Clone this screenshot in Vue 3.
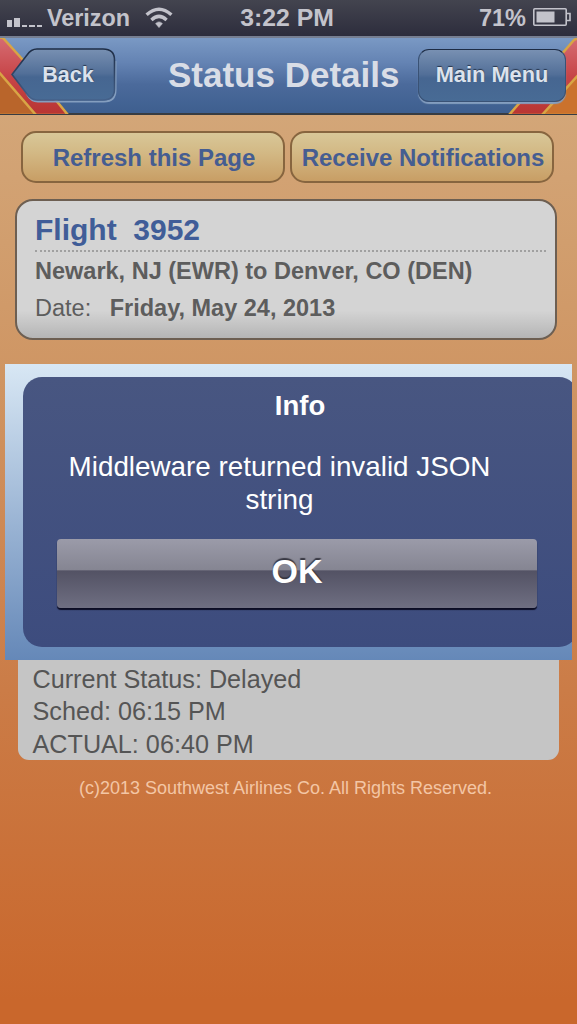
<template>
  <div class="screen">
    <div class="status-bar">
      <div class="carrier">
        <div class="signal">
          <i v-for="(bar, index) in signalBars" :key="index" :style="{ height: bar + 'px' }"></i>
        </div>
        <span>Verizon</span>
        <svg class="wifi" width="28" height="21" viewBox="0 0 28 21">
          <path d="M1.6 7.8 Q14 -3.4 26.4 7.8" />
          <path d="M6.4 12.9 Q14 5.8 21.6 12.9" />
          <path class="dot" d="M14 20.6 L10.6 16.6 Q14 13.2 17.4 16.6 Z" />
        </svg>
      </div>
      <div class="time">3:22 PM</div>
      <div class="battery">
        <span>71%</span>
        <svg width="38" height="18" viewBox="0 0 38 18">
          <rect x="0.8" y="0.8" width="32.4" height="16.4" rx="1" fill="none" stroke="#c3c3cb" stroke-width="1.6" />
          <rect x="3.5" y="3.5" width="18" height="11" fill="#c3c3cb" />
          <path d="M33.5 5.5 H37 V12.5 H33.5" fill="none" stroke="#c3c3cb" stroke-width="1.6" />
        </svg>
      </div>
    </div>

    <header class="header">
      <svg class="stripes" width="577" height="76" viewBox="0 0 577 76">
        <g stroke="#d8a545" stroke-width="2.5">
          <path d="M-3 -1 L3 0 L23 22 L68 77 H34 L-3 36 Z" fill="url(#stripe)" />
          <path d="M-3 32 L36 77 H-3 Z" fill="#b9652b" />
          <path d="M580 -1 L574 2 L509 77 H543 L580 38 Z" fill="url(#stripe)" />
          <path d="M580 35 L542 77 H580 Z" fill="#cb722d" />
        </g>
        <defs>
          <linearGradient id="stripe" x1="0" y1="0" x2="0" y2="1">
            <stop offset="0" stop-color="#d66d73" />
            <stop offset="0.5" stop-color="#c74548" />
            <stop offset="1" stop-color="#b83532" />
          </linearGradient>
        </defs>
      </svg>
      <button class="back">
        <svg width="106" height="56" viewBox="0 0 106 56">
          <defs>
            <linearGradient id="backFill" x1="0" y1="0" x2="0" y2="1">
              <stop offset="0" stop-color="#7890b2" />
              <stop offset="0.48" stop-color="#526f98" />
              <stop offset="0.55" stop-color="#466691" />
              <stop offset="1" stop-color="#486b95" />
            </linearGradient>
            <linearGradient id="backEdge" x1="0" y1="0" x2="0" y2="1">
              <stop offset="0" stop-color="#1d2c45" />
              <stop offset="1" stop-color="#45618a" />
            </linearGradient>
          </defs>
          <path
            d="M16 46 Q20 53.5 27 53.5 H93 Q104.5 53.5 104.5 42 V13"
            fill="none"
            stroke="#849ebf"
            stroke-width="2"
          />
          <path
            d="M26 1 H92 Q103.5 1 103.5 12 V41 Q103.5 52 92 52 H26 Q20 52 16 46 L1 26.5 L16 7 Q20 1 26 1 Z"
            fill="url(#backFill)"
            stroke="url(#backEdge)"
            stroke-width="1.6"
          />
        </svg>
        <span>Back</span>
      </button>
      <h1>Status Details</h1>
      <button class="menu">Main Menu</button>
    </header>

    <div class="actions">
      <button>Refresh this Page</button>
      <button>Receive Notifications</button>
    </div>

    <section class="flight">
      <h2>Flight&nbsp; 3952</h2>
      <p class="route">Newark, NJ (EWR) to Denver, CO (DEN)</p>
      <p class="date">Date: <b>Friday, May 24, 2013</b></p>
    </section>

    <section class="details">
      <p v-for="line in details" :key="line">{{ line }}</p>
    </section>

    <footer>(c)2013 Southwest Airlines Co. All Rights Reserved.</footer>

    <div class="dialog-frame">
      <div class="dialog">
        <h3>Info</h3>
        <p>Middleware returned invalid JSON string</p>
        <button><span>OK</span></button>
      </div>
    </div>
  </div>
</template>

<script setup>
// Heights of the signal bars, the last three have no reception
const signalBars = [7, 9, 2, 2, 2]

const details = ['Current Status: Delayed', 'Sched: 06:15 PM', 'ACTUAL: 06:40 PM']
</script>

<style>
body {
  margin: 0;
  background: #000;
}
</style>

<style scoped>
.screen {
  position: relative;
  box-sizing: border-box;
  width: 577px;
  height: 1024px;
  overflow: hidden;
  font-family: 'Liberation Sans', Arial, sans-serif;
  background: linear-gradient(#d3a678 115px, #cf9664 370px, #cb7c47 690px, #c9672c 1000px);
}
h1,
h2,
h3,
p {
  margin: 0;
}
button {
  padding: 0;
  font-family: inherit;
  font-weight: bold;
}

.status-bar {
  display: grid;
  grid-template-columns: 1fr auto 1fr;
  align-items: center;
  box-sizing: border-box;
  height: 36px;
  padding: 0 6px 0 7px;
  color: #c3c3cb;
  font-size: 23.4px;
  font-weight: bold;
  background: linear-gradient(#43444f, #2d2d3d);
}
.carrier,
.battery {
  display: flex;
  align-items: center;
}
.signal {
  display: flex;
  align-items: flex-end;
  gap: 2px;
  height: 10px;
  margin: 7px 5px 0 0;
}
.signal i {
  width: 5.4px;
  background: #c3c3cb;
}
.wifi {
  margin: 0 0 1px 15px;
}
.wifi path {
  fill: none;
  stroke: #c3c3cb;
  stroke-width: 3.4;
}
.wifi .dot {
  fill: #c3c3cb;
  stroke: #c3c3cb;
  stroke-width: 0.6;
}
.time {
  padding-right: 4px;
  font-size: 24.8px;
}
.battery {
  justify-content: flex-end;
  gap: 7px;
  font-size: 23.5px;
}
.battery svg {
  margin-bottom: 2px;
}

.header {
  position: relative;
  display: flex;
  align-items: flex-start;
  box-sizing: border-box;
  height: 79px;
  padding: 12px 11px 0 11px;
  border-top: 2px solid #777f91;
  border-bottom: 2px solid #383c42;
  background: linear-gradient(#7a99c4, #6483b3 33%, #4b6a9b 62%, #3e5f8f);
}
.stripes {
  position: absolute;
  top: 0;
  left: 0;
}
.header button {
  position: relative;
  color: #dbe2ec;
  font-size: 21.8px;
  text-shadow: 0 -1px 1px #28364d;
}
.header .back {
  width: 106px;
  height: 54px;
  margin-top: -2px;
  border: 0;
  font-size: 21.5px;
  background: none;
}
.back svg {
  position: absolute;
  top: 0;
  left: 0;
}
.back span {
  position: relative;
  left: 4px;
}
.header h1 {
  margin: 5px 0 0 51px;
  color: #d9dde6;
  font-size: 35px;
  line-height: 40px;
  white-space: nowrap;
}
.header .menu {
  box-sizing: border-box;
  width: 148px;
  height: 53px;
  margin: -1px 0 0 auto;
  padding-bottom: 2px;
  border: 1.6px solid #3a5275;
  border-top-color: #1d2c45;
  border-radius: 11px;
  white-space: nowrap;
  background: linear-gradient(#7890b2, #526f98 48%, #466691 55%, #486b95);
  box-shadow: 0 2px 1px #849ebf;
}

.actions {
  display: flex;
  gap: 5px;
  padding: 16px 22px 0 21px;
}
.actions button {
  box-sizing: border-box;
  width: 264px;
  height: 52px;
  padding: 2px 0 0 2px;
  border: 2px solid #87653f;
  border-radius: 15px;
  color: #455d91;
  font-size: 24px;
  white-space: nowrap;
  background: linear-gradient(#d8c798, #d3b985 40%, #c89e65);
}

.flight {
  box-sizing: border-box;
  width: 542px;
  height: 141px;
  margin: 16px 0 0 15px;
  padding: 11px 9px 0 18px;
  border: 2px solid #6d5f52;
  border-radius: 18px;
  color: #5d5d5d;
  font-size: 23.5px;
  background: linear-gradient(#d4d4d4 80%, #b5b5b5);
}
.flight h2 {
  height: 38px;
  border-bottom: 2px dotted #a0a0a0;
  color: #405d98;
  font-size: 30px;
  line-height: 36px;
}
.route {
  font-weight: bold;
  line-height: 38px;
}
.date {
  line-height: 37px;
}
.date b {
  margin-left: 12px;
}

.details {
  display: flex;
  flex-direction: column;
  justify-content: flex-end;
  box-sizing: border-box;
  width: 541px;
  height: 380px;
  margin: 40px 0 0 18px;
  padding-left: 14.5px;
  border-radius: 11px;
  color: #555;
  font-size: 25.2px;
  line-height: 32.5px;
  background: #c5c5c5;
}

footer {
  margin-top: 17px;
  padding-right: 6px;
  color: #f3c6a5;
  font-size: 18px;
  line-height: 22px;
  text-align: center;
}

/* Modal on top of the page */
.dialog-frame {
  position: absolute;
  top: 364px;
  left: 5px;
  box-sizing: border-box;
  width: 567px;
  height: 296px;
  padding: 13px 0 0 18px;
  overflow: hidden;
  background: linear-gradient(#d8e7f4, #6588b8);
}
.dialog {
  box-sizing: border-box;
  width: 555px;
  height: 270px;
  padding: 12px 40px 0 34px;
  border-radius: 19px;
  color: #fff;
  font-size: 27.8px;
  line-height: 33px;
  text-align: center;
  background: linear-gradient(#485681, #3d4c7e);
}
.dialog h3 {
  padding-left: 5px;
  font-size: 27.5px;
}
.dialog p {
  width: 445px;
  margin: 28px 0 23px;
}
.dialog button {
  display: block;
  width: 480px;
  height: 69px;
  padding-bottom: 4px;
  border: 0;
  border-radius: 4px;
  color: #fff;
  font-size: 34px;
  text-shadow: 0 -2px 1px #383843;
  background: linear-gradient(#9b9ba9, #858592 45%, #535264 46%, #6f6f82);
  box-shadow: 0 2px 1px #0c0d24;
}
</style>
